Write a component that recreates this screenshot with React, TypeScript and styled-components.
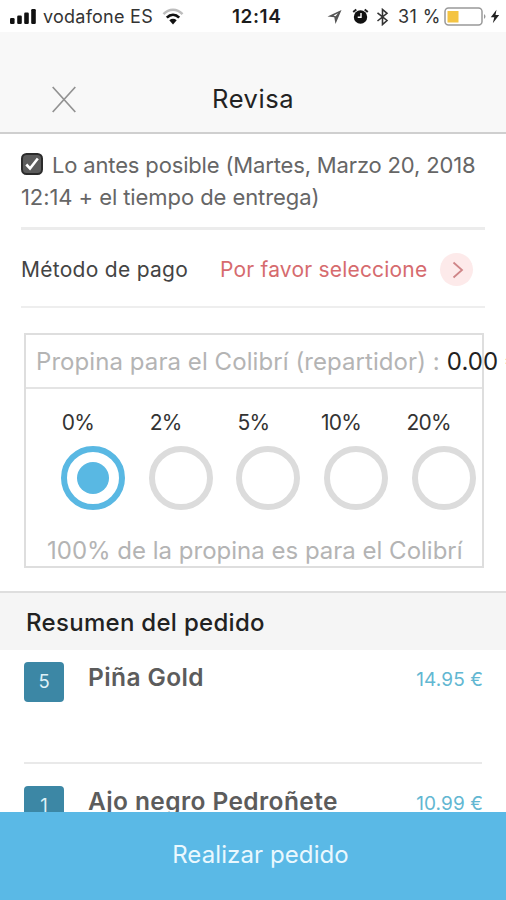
import React, { useState } from 'react';
import styled, { createGlobalStyle } from 'styled-components';

const GlobalStyle = createGlobalStyle`
  * { box-sizing: border-box; }
  body { margin: 0; background: #fff; }
  body, button { font-family: Inter, "Liberation Sans", sans-serif; }
`;

const Screen = styled.div`
  display: flex;
  flex-direction: column;
  width: 506px;
  height: 900px;
  overflow: hidden;
  background: #fff;
  white-space: nowrap;
`;

const StatusBar = styled.div`
  display: grid;
  grid-template-columns: 232px 95px 1fr;
  flex: none;
  height: 32px;
  font-size: 18px;
  line-height: 34px;
  color: #333;
`;

const StatusGroup = styled.div`
  display: flex;
  align-items: flex-start;
`;

const Carrier = styled.span`
  margin: 0 9px 0 7px;
  letter-spacing: 0.25px;
`;

const Clock = styled.span`
  font-size: 19px;
  font-weight: 600;
  letter-spacing: 0.55px;
  color: #1c1c1c;
`;

const BatteryLevel = styled.span`
  margin: 0 3px 0 9px;
  letter-spacing: 0.45px;
`;

const Glyph = styled.svg<{ $top: number; $left?: number }>`
  display: block;
  flex: none;
  margin-top: ${(p) => p.$top}px;
  margin-left: ${(p) => p.$left ?? 0}px;
`;

const Header = styled.header`
  display: grid;
  grid-template-columns: 212px 1fr;
  flex: none;
  height: 102px;
  background: #f8f8f8;
  border-bottom: 2px solid #cfcfcf;
`;

const CloseButton = styled.button`
  width: 24px;
  height: 27px;
  margin: 54px 0 0 52px;
  padding: 0;
  border: 0;
  background: none;
`;

const Title = styled.h1`
  margin: 42px 0 0;
  font-size: 25.5px;
  font-weight: 400;
  line-height: 50px;
  letter-spacing: 0.6px;
  color: #222;
`;

const Content = styled.main`
  display: flex;
  flex-direction: column;
  flex: 1;
  min-height: 0;
  overflow: hidden;
`;

const Delivery = styled.div`
  display: flex;
  flex-direction: column;
  flex: none;
  height: 96px;
  margin: 0 21px;
  padding-top: 15px;
  border-bottom: 3px solid #ececec;
  font-size: 22px;
  line-height: 32px;
  color: #666;
`;

const DeliveryLine = styled.div<{ $spacing: number }>`
  display: flex;
  letter-spacing: ${(p) => p.$spacing}px;
`;

const Checkbox = styled.span`
  width: 22px;
  height: 22px;
  margin: 4px 9px 0 0;
`;

const Payment = styled.div`
  display: flex;
  align-items: center;
  flex: none;
  height: 78px;
  margin: 0 21px;
  padding-top: 3px;
  border-bottom: 2px solid #eeeeee;
  font-size: 21px;
`;

const PaymentLabel = styled.span`
  width: 199px;
  letter-spacing: 0.28px;
  color: #444;
`;

const PaymentValue = styled.span`
  width: 221px;
  letter-spacing: 0.2px;
  color: #d66b6e;
`;

const Arrow = styled.span`
  display: flex;
  align-items: center;
  justify-content: center;
  width: 33px;
  height: 33px;
  margin-left: -1px;
  border-radius: 50%;
  background: #fdeaea;
`;

const TipBox = styled.section`
  flex: none;
  width: 460px;
  height: 235px;
  margin: 25px 0 23px 24px;
  border: 2px solid #dedede;
  color: #b4b4b4;
  font-size: 24px;
`;

const TipTitle = styled.div`
  display: flex;
  align-items: center;
  height: 54px;
  padding-left: 10px;
  border-bottom: 2px solid #e4e4e4;
  letter-spacing: 0.07px;
`;

const TipAmount = styled.span`
  display: flex;
  gap: 7px;
  margin-left: 7px;
  color: #222;
`;

const TipOptions = styled.div`
  display: flex;
  height: 121px;
  margin-left: 23px;
  padding-top: 22px;
`;

const TipOption = styled.label`
  display: flex;
  flex-direction: column;
  flex: none;
  width: 87.7px;
`;

const TipPercent = styled.span`
  width: 58px;
  font-size: 21px;
  line-height: 24px;
  letter-spacing: -0.8px;
  text-align: center;
  color: #333;
`;

const Radio = styled.span<{ $on: boolean }>`
  display: flex;
  align-items: center;
  justify-content: center;
  width: 64px;
  height: 64px;
  margin: 11px 0 0 12px;
  border: 6px solid ${(p) => (p.$on ? '#59b8e3' : '#dcdcdc')};
  border-radius: 50%;

  &::after {
    content: '';
    width: 32px;
    height: 32px;
    border-radius: 50%;
    background: ${(p) => (p.$on ? '#59b8e3' : 'transparent')};
  }
`;

const TipNote = styled.div`
  padding: 26px 0 0 21px;
  line-height: 30px;
`;

const SummaryHeading = styled.h2`
  display: flex;
  align-items: center;
  flex: none;
  height: 59px;
  margin: 0;
  padding: 2px 0 0 26px;
  border-top: 2px solid #dedede;
  background: #f5f5f5;
  font-size: 24px;
  font-weight: 500;
  letter-spacing: 0.3px;
  color: #222;
`;

const OrderItem = styled.div<{ $first: boolean }>`
  display: flex;
  align-items: flex-start;
  flex: none;
  height: ${(p) => (p.$first ? 114 : 124)}px;
  margin: 0 24px;
  padding-top: ${(p) => (p.$first ? 12 : 22)}px;
  border-bottom: 2px solid #e9e9e9;
`;

const Quantity = styled.span`
  width: 40px;
  height: 40px;
  border-radius: 4px;
  background: #3c87a5;
  font-size: 18.5px;
  line-height: 38px;
  text-align: center;
  color: #dff1f7;
`;

const ItemName = styled.span`
  flex: 1;
  margin-left: 24px;
  font-size: 24.5px;
  font-weight: 600;
  line-height: 31px;
  letter-spacing: 0.4px;
  color: #5c5c5c;
`;

const Price = styled.span`
  margin-right: -1px;
  font-size: 19px;
  line-height: 36px;
  letter-spacing: 0.1px;
  color: #62b7d2;
`;

const OrderButton = styled.button`
  flex: none;
  height: 88px;
  padding: 0 0 4px 15px;
  border: 0;
  background: #5ab9e6;
  font-size: 24px;
  letter-spacing: 0.1px;
  color: #eaf8fe;
`;

const tips = ['0%', '2%', '5%', '10%', '20%'];

const order = [
  { quantity: 5, name: 'Piña Gold', price: '14.95 €' },
  { quantity: 1, name: 'Ajo negro Pedroñete', price: '10.99 €' },
];

function Status() {
  return (
    <StatusBar>
      <StatusGroup>
        <Glyph $top={8} $left={9} width="27" height="17" viewBox="0 0 27 17">
          <g fill="#111">
            <rect x="1" y="10" width="4.6" height="6" rx="1.2" />
            <rect x="8.2" y="7.5" width="4.6" height="8.5" rx="1.2" />
            <rect x="15.2" y="4.5" width="4.6" height="11.5" rx="1.2" />
            <rect x="22.2" y="1" width="4.6" height="15" rx="1.2" />
          </g>
        </Glyph>
        <Carrier>vodafone ES</Carrier>
        <Glyph $top={8} width="22" height="17" viewBox="0 0 22 17" fill="none">
          <path d="M1.5 6.2C7 .2 15 .2 20.500 6.2" stroke="#bdbdbd" strokeWidth="2.5" />
          <path d="M4.800 9.600C8.500 6 13.500 6 17.200 9.600" stroke="#111" strokeWidth="2.700" />
          <path d="M7.300 12.200Q11 9.300 14.700 12.200L11 16.500Z" fill="#111" />
        </Glyph>
      </StatusGroup>
      <Clock>12:14</Clock>
      <StatusGroup>
        <Glyph $top={9} width="15" height="16" viewBox="0 0 15 16">
          <path d="M.5 7.500L14.500 1L8.500 15L7.300 8.300Z" fill="#555" />
          <path d="M6.500 6.500L11 4.300L8.600 7.200Z" fill="#fff" />
        </Glyph>
        <Glyph $top={8} $left={10} width="17" height="17" viewBox="0 0 17 17" fill="none">
          <circle cx="8.500" cy="9" r="6.700" fill="#111" />
          <path d="M1.200 4L4.300 1.500M15.800 4L12.700 1.500" stroke="#222" strokeWidth="2" />
          <path d="M9 5V9.200H5.700" stroke="#fff" strokeWidth="1.400" />
        </Glyph>
        <Glyph $top={8} $left={7} width="13" height="18" viewBox="0 0 13 18" fill="none">
          <path d="M1.500 4.800L11 12.500L6.500 16.500V1.500L11 5.300L1.500 13" stroke="#333" strokeWidth="1.600" />
        </Glyph>
        <BatteryLevel>31 %</BatteryLevel>
        <Glyph $top={7} width="43" height="19" viewBox="0 0 43 19" fill="none">
          <rect x="1" y="1" width="37" height="17" rx="3.500" stroke="#999" strokeWidth="1.500" />
          <rect x="3.500" y="4" width="11" height="11.500" fill="#f4c443" />
          <path d="M40 7Q43 9.500 40 12Z" fill="#999" />
        </Glyph>
        <Glyph $top={9} $left={3} width="10" height="15" viewBox="0 0 10 15">
          <path d="M6.500 .8L.8 8.300H4.300L2.800 14.200L9.200 6H5.500Z" fill="#222" />
        </Glyph>
      </StatusGroup>
    </StatusBar>
  );
}

export default function App() {
  const [tip, setTip] = useState(0);

  return (
    <Screen>
      <GlobalStyle />
      <Status />
      <Header>
        <CloseButton aria-label="Cerrar">
          <Glyph $top={0} width="24" height="27" viewBox="0 0 24 27">
            <path d="M.7 1L23.300 26M23.300 1L.7 26" stroke="#929292" strokeWidth="1.700" />
          </Glyph>
        </CloseButton>
        <Title>Revisa</Title>
      </Header>
      <Content>
        <Delivery>
          <DeliveryLine $spacing={-0.16}>
            <Checkbox>
              <Glyph $top={0} width="22" height="22" viewBox="0 0 22 22" fill="none">
                <rect x="1" y="1" width="20" height="20" rx="4.500" fill="#5c5c5c" stroke="#2b2b2b" strokeWidth="2" />
                <path d="M5.300 11.500L9 15.500L16.800 5.500" stroke="#fff" strokeWidth="2.600" />
              </Glyph>
            </Checkbox>
            Lo antes posible (Martes, Marzo 20, 2018
          </DeliveryLine>
          <DeliveryLine $spacing={-0.08}>12:14 + el tiempo de entrega)</DeliveryLine>
        </Delivery>
        <Payment>
          <PaymentLabel>Método de pago</PaymentLabel>
          <PaymentValue>Por favor seleccione</PaymentValue>
          <Arrow>
            <Glyph $top={0} $left={2} width="12" height="18" viewBox="0 0 12 18" fill="none">
              <path d="M1.500 1.500L10 9L1.500 16.500" stroke="#cf8587" strokeWidth="1.800" />
            </Glyph>
          </Arrow>
        </Payment>
        <TipBox>
          <TipTitle>
            Propina para el Colibrí (repartidor) :
            <TipAmount>
              <span>0.00</span>
              <span>€</span>
            </TipAmount>
          </TipTitle>
          <TipOptions>
            {tips.map((percent, index) => (
              <TipOption key={percent} onClick={() => setTip(index)}>
                <TipPercent>{percent}</TipPercent>
                <Radio $on={index === tip} />
              </TipOption>
            ))}
          </TipOptions>
          <TipNote>100% de la propina es para el Colibrí</TipNote>
        </TipBox>
        <SummaryHeading>Resumen del pedido</SummaryHeading>
        {order.map((item, index) => (
          <OrderItem key={item.name} $first={index === 0}>
            <Quantity>{item.quantity}</Quantity>
            <ItemName>{item.name}</ItemName>
            <Price>{item.price}</Price>
          </OrderItem>
        ))}
      </Content>
      <OrderButton>Realizar pedido</OrderButton>
    </Screen>
  );
}
